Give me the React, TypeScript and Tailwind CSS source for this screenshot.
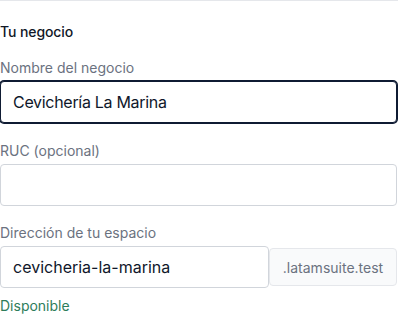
import React from "react";

export default function App() {
  const font = { fontFamily: "Inter, 'Noto Sans', sans-serif" };
  return (
    <div className="w-[398px] h-[315px] bg-white overflow-hidden" style={font}>
      <div className="border-t border-[#e5e7eb] pt-[21px]">
        <h2 className="text-[14px] leading-[20px] font-medium text-[#111827] tracking-[-0.1px]">Tu negocio</h2>

        <div className="mt-[16px]">
          <label className="block text-[14px] leading-[20px] text-[#6b7280] mb-[3px]">Nombre del negocio</label>
          <input
            readOnly
            value="Cevichería La Marina"
            className="block w-[397px] h-[42px] rounded-[4px] border border-[#0f1b33] ring-1 ring-[#0f1b33] px-[12px] text-[16px] tracking-[-0.3px] text-[#0f172a] outline-none bg-white"
          />
        </div>

        <div className="mt-[18px]">
          <label className="block text-[14px] leading-[20px] text-[#6b7280] mb-[3px]">RUC (opcional)</label>
          <input
            readOnly
            value=""
            className="block w-[397px] h-[42px] rounded-[4px] border border-[#d1d5db] px-[12px] text-[16px] text-[#0f172a] outline-none bg-white"
          />
        </div>

        <div className="mt-[17px]">
          <label className="block text-[14px] leading-[20px] text-[#6b7280] mb-[3px]">Dirección de tu espacio</label>
          <div className="flex items-center w-[397px]">
            <input
              readOnly
              value="cevicheria-la-marina"
              className="block w-[269px] h-[42px] rounded-[4px] border border-[#d1d5db] px-[12px] text-[16px] text-[#0f172a] outline-none bg-white"
            />
            <div className="flex-1 h-[38px] rounded-[4px] border border-[#e5e7eb] bg-[#f9fafb] flex items-center justify-center text-[14px] text-[#6b7280]">
              .latamsuite.test
            </div>
          </div>
        </div>

        <p className="mt-[8px] text-[14px] leading-[20px] text-[#2e7d5b]">Disponible</p>
      </div>
    </div>
  );
}
